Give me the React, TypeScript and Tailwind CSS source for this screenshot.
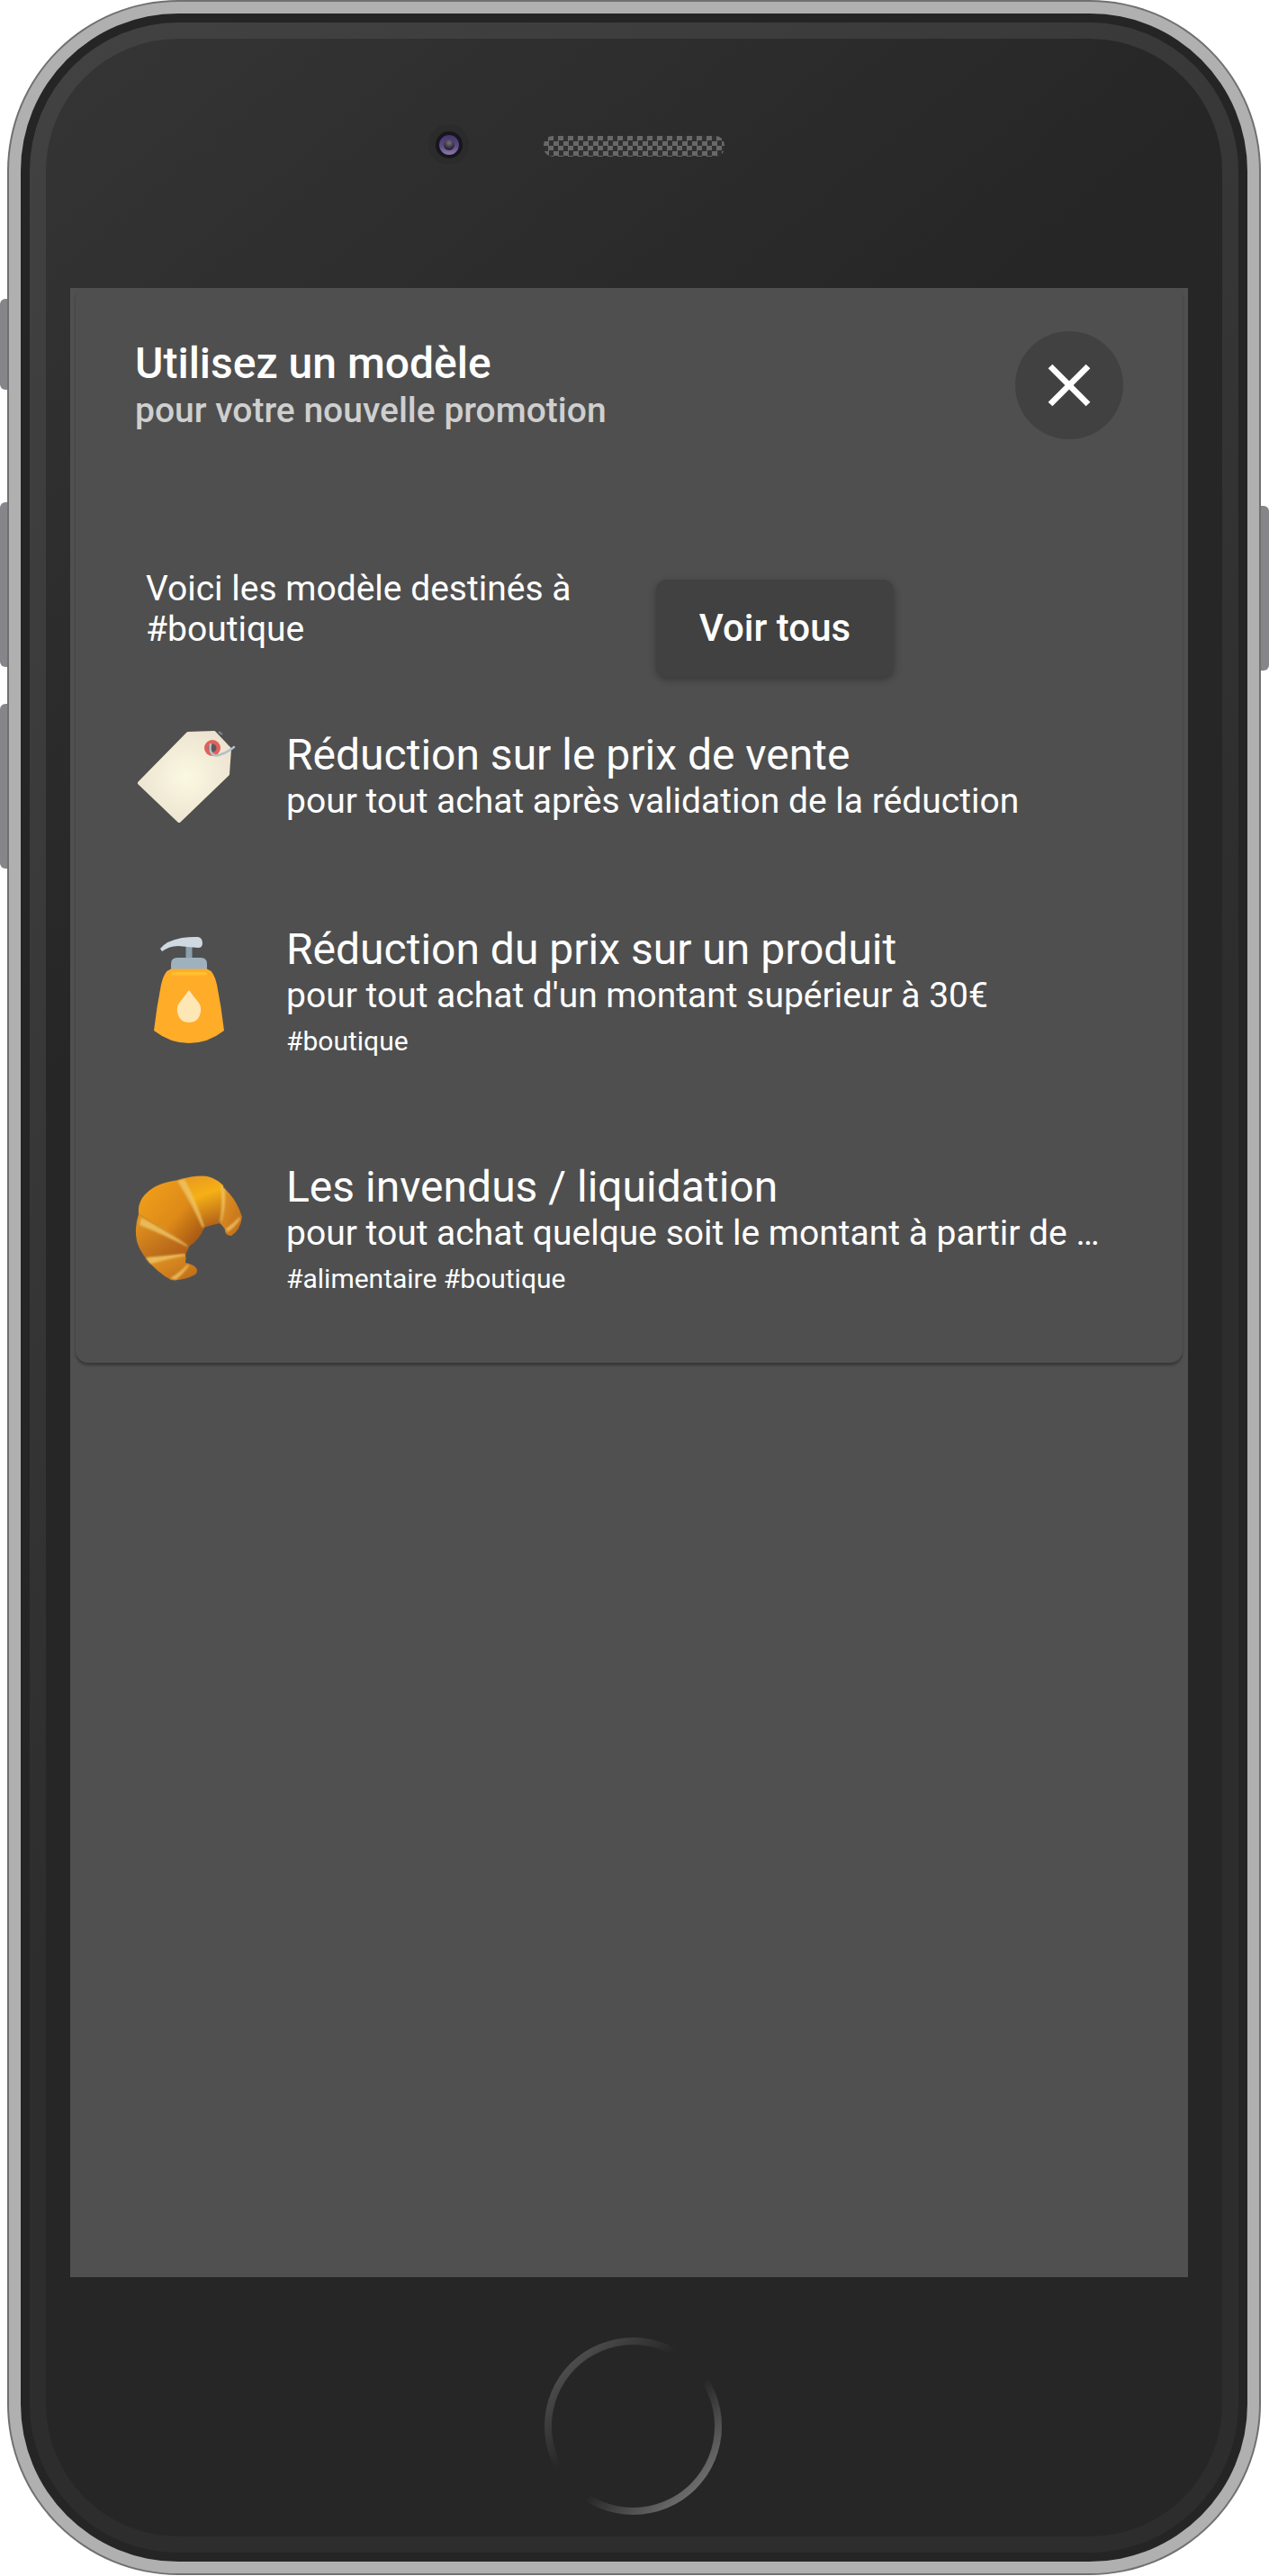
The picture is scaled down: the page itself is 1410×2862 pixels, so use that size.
import React from 'react';
import { X } from 'lucide-react';

const TagEmoji = () => (
  <svg viewBox="0 0 150 150" className="w-[150px] h-[150px]">
    <defs>
      <radialGradient id="tagFill" cx="0.52" cy="0.5" r="0.6">
        <stop offset="0" stopColor="#fbf9e2" />
        <stop offset="1" stopColor="#ebe2cf" />
      </radialGradient>
    </defs>
    <path
      d="M79 34 L108 33 L125 51 L123 79 L69 131 L25 89 Z"
      fill="url(#tagFill)"
      stroke="url(#tagFill)"
      strokeWidth="4"
      strokeLinejoin="round"
    />
    <path d="M113 32 L117 35" stroke="#7d8a92" strokeWidth="2" />
    <circle cx="106" cy="50" r="9" fill="#e2605c" />
    <circle cx="106" cy="50" r="4.5" fill="#5a5a5a" />
    <path
      d="M104 46 C102 54 106 60 113 58 C120 56 125 53 130 49"
      fill="none"
      stroke="#b4c0c6"
      strokeWidth="2.5"
      strokeLinecap="round"
    />
  </svg>
);

const BottleEmoji = () => (
  <svg viewBox="0 0 150 170" className="w-[150px] h-[170px]">
    <rect x="76.5" y="32" width="7" height="16" fill="#8ba0ad" />
    <path d="M60 58 V52 Q60 45 67 45 H93 Q100 45 100 52 V58 Z" fill="#9fb1bd" />
    <path
      d="M48 35 Q55 26 72 23 Q82 21.5 90 22 Q95 23 95 29 Q95 34 90 34 Q78 33 68 32 Q58 32 50 38 Z"
      fill="#cfd9df"
    />
    <path
      d="M60 57.5 H100 Q108 60 111 75 Q116 100 119 126 Q101 140 80 140 Q59 140 41 126 Q44 100 49 75 Q52 60 60 57.5 Z"
      fill="#ffac29"
    />
    <rect x="60" y="61" width="40" height="3.5" rx="1.7" fill="#ffc02e" />
    <path
      d="M80 81 Q85 88 90 94 Q94 99 93 105 Q91 117 80 117 Q69 117 67 105 Q66 99 70 94 Q75 88 80 81 Z"
      fill="#ffe6b5"
    />
  </svg>
);

const CroissantEmoji = () => (
  <svg viewBox="0 0 150 150" className="w-[150px] h-[150px]">
    <defs>
      <linearGradient id="crA" x1="0.1" y1="0.2" x2="0.9" y2="0.9">
        <stop offset="0" stopColor="#ee9c1a" />
        <stop offset="0.55" stopColor="#dd8a18" />
        <stop offset="1" stopColor="#a65812" />
      </linearGradient>
      <linearGradient id="crB" x1="0.3" y1="0" x2="0.6" y2="1">
        <stop offset="0" stopColor="#e99a20" />
        <stop offset="0.4" stopColor="#f6b015" />
        <stop offset="1" stopColor="#b2621a" />
      </linearGradient>
      <linearGradient id="crC" x1="0" y1="0" x2="0.8" y2="1">
        <stop offset="0" stopColor="#e69a20" />
        <stop offset="1" stopColor="#b05e18" />
      </linearGradient>
      <linearGradient id="crD" x1="0" y1="0" x2="1" y2="1">
        <stop offset="0" stopColor="#e79a24" />
        <stop offset="1" stopColor="#bd6a18" />
      </linearGradient>
      <filter id="crSoft" x="-20%" y="-20%" width="140%" height="140%">
        <feGaussianBlur stdDeviation="1" />
      </filter>
    </defs>
    {/* tip right */}
    <path d="M114 27 Q132 40 139 63 Q137 78 127 84 Q120 84 120 77 Q116 71 114 70 Z" fill="url(#crD)" />
    {/* upper lobe */}
    <path d="M68 22 Q92 15 104 19 Q112 22 118 28 Q120 50 115 70 Q104 72 96 75 Q88 52 68 22 Z" fill="url(#crB)" />
    {/* main lobe */}
    <path d="M69 22 Q40 25 28 42 Q23 50 24 60 Q50 75 80 96 Q92 88 97 75 Q88 50 69 22 Z" fill="url(#crA)" />
    {/* lower lobe */}
    <path d="M24 60 Q19 76 22 90 Q25 100 32 109 Q55 107 76 105 Q79 100 80 96 Q55 78 24 60 Z" fill="url(#crC)" />
    {/* bottom tip */}
    <path d="M32 109 Q45 125 60 133 Q75 134 87 127 Q92 122 85 117 Q78 114 76 114 Q77 108 76 104 Q55 107 32 109 Z" fill="url(#crD)" />
    {/* highlights, tapered and softened */}
    <g filter="url(#crSoft)" fill="#eec264" opacity="0.85">
      <path d="M67 23 L75 21 Q88 45 97 74 L95 75 Q84 50 67 23 Z" />
      <path d="M27 64 L25 72 Q50 82 78 96 L79 95 Q55 78 27 64 Z" />
      <path d="M32 108 L37 115 Q55 110 75 106 L75 104 Q55 106 32 108 Z" />
      <path d="M115 27 L120 33 Q121 52 116 68 L114 69 Q118 48 115 27 Z" />
      <path d="M59 131 L65 133 Q74 126 80 117 L78 116 Q70 125 59 131 Z" />
      <path d="M121 76 L122 80 Q131 75 137 65 L136 63 Q129 71 121 76 Z" />
    </g>
  </svg>
);

const templates = [
  {
    icon: <TagEmoji />,
    rowClass: 'flex items-start mt-[59px]',
    iconClass: '-mt-[30px]',
    title: 'Réduction sur le prix de vente',
    description: 'pour tout achat après validation de la réduction',
    tags: '',
  },
  {
    icon: <BottleEmoji />,
    rowClass: 'flex items-start mt-[114px]',
    iconClass: '-mt-[8px]',
    title: 'Réduction du prix sur un produit',
    description: "pour tout achat d'un montant supérieur à 30€",
    tags: '#boutique',
  },
  {
    icon: <CroissantEmoji />,
    rowClass: 'flex items-start mt-[106px]',
    iconClass: '-mt-[2px]',
    title: 'Les invendus / liquidation',
    description: 'pour tout achat quelque soit le montant à partir de …',
    tags: '#alimentaire #boutique',
  },
];

export default function App() {
  return (
    <div className="relative w-[1410px] h-[2862px] bg-white pl-[8px] pr-[9px] font-['Roboto',sans-serif] overflow-hidden">
      {/* side buttons */}
      <div className="absolute left-0 top-[332px] w-[10px] h-[101px] rounded-l-[6px] bg-[#85858a]" />
      <div className="absolute left-0 top-[558px] w-[10px] h-[183px] rounded-l-[6px] bg-[#85858a]" />
      <div className="absolute left-0 top-[782px] w-[10px] h-[183px] rounded-l-[6px] bg-[#85858a]" />
      <div className="absolute right-0 top-[562px] w-[10px] h-[183px] rounded-r-[6px] bg-[#85858a]" />

      {/* phone shell, ring by ring */}
      <div className="relative h-[2861px] rounded-[190px] bg-[#707070] p-[2px]">
        <div className="h-full rounded-[188px] bg-[#b0b0b0] p-[13px]">
          <div className="h-full rounded-[175px] bg-[#252525] p-[10px]">
            <div className="h-full rounded-[165px] bg-[linear-gradient(140deg,#424242_0%,#3a3a3a_25%,#2d2d2d_55%,#2d2d2d_100%)] p-[18px]">
              <div className="flex flex-col h-full rounded-[147px] bg-[linear-gradient(140deg,#353535_0%,#2c2c2c_18%,#262626_30%,#262626_100%)] pl-[27px] pr-[38px]">
                {/* top bezel */}
                <div className="relative h-[277px] shrink-0">
                  <div className="absolute left-[398px] top-[95px] flex items-center justify-center w-[45px] h-[45px] rounded-full bg-[#2b2b2b]">
                    <div className="flex items-center justify-center w-[30px] h-[30px] rounded-full bg-[#17161c]">
                      <div className="flex items-center justify-center w-[22px] h-[22px] rounded-full bg-[linear-gradient(180deg,#43356a_0%,#5c4a85_55%,#8c7aaa_100%)]">
                        <div className="w-[12px] h-[12px] rounded-full bg-[radial-gradient(circle_at_50%_30%,#77727f,#25232b_70%)]" />
                      </div>
                    </div>
                  </div>
                  <div className="absolute left-[526px] top-[108px] w-[201px] h-[23px] rounded-[10px] bg-[repeating-conic-gradient(#686868_0_25%,#303030_0_50%)] bg-[length:11px_11px]" />
                </div>

                {/* screen */}
                <div className="flex-1 bg-[#505050] px-[6px]">
                  <div className="h-[1194px] rounded-b-[14px] rounded-t-[10px] bg-[#4f4f4f] shadow-[0_3px_3px_rgba(0,0,0,0.3)]">
                    <div className="flex justify-between px-[66px] pt-[48px]">
                      <div className="pt-[10px]">
                        <div className="text-[48px] leading-[52px] font-medium text-white">Utilisez un modèle</div>
                        <div className="text-[39px] leading-[52px] font-medium text-[#cfcfcf]">pour votre nouvelle promotion</div>
                      </div>
                      <button className="flex items-center justify-center w-[120px] h-[120px] rounded-full bg-[#414141] text-white">
                        <X size={84} strokeWidth={1.9} strokeLinecap="butt" strokeLinejoin="miter" />
                      </button>
                    </div>

                    <div className="flex items-start pl-[78px] mt-[142px]">
                      <div className="w-[567px] mt-[2px] text-[39px] leading-[45px] text-white">
                        Voici les modèle destinés à
                        <br />
                        #boutique
                      </div>
                      <button className="w-[264px] h-[108px] mt-[14px] pb-[2px] rounded-[12px] bg-[#414141] text-[42px] font-medium text-white shadow-[0_3px_8px_rgba(0,0,0,0.3)]">
                        Voir tous
                      </button>
                    </div>

                    <div className="flex flex-col pl-[66px]">
                      {templates.map((t, i) => (
                        <div key={i} className={t.rowClass}>
                          <div className="w-[188px] h-0 -ml-[20px] shrink-0">
                            <div className={t.iconClass}>{t.icon}</div>
                          </div>
                          <div className="min-w-0 flex-1">
                            <div className="text-[48px] leading-[56px] text-white whitespace-nowrap">{t.title}</div>
                            <div className="text-[39px] leading-[46px] text-white whitespace-nowrap">{t.description}</div>
                            {t.tags && <div className="text-[30px] leading-[56px] text-white">{t.tags}</div>}
                          </div>
                        </div>
                      ))}
                    </div>
                  </div>
                </div>

                {/* bottom bezel with home button */}
                <div className="flex justify-center items-start h-[288px] shrink-0 pl-[8px]">
                  <div className="mt-[67px] w-[197px] h-[197px] rounded-full bg-[linear-gradient(135deg,#4c4c4c_15%,#262626_41%,#262626_57%,#6c6c6c_85%)] p-[8px]">
                    <div className="w-full h-full rounded-full bg-[#262626]" />
                  </div>
                </div>
              </div>
            </div>
          </div>
        </div>
      </div>
    </div>
  );
}
